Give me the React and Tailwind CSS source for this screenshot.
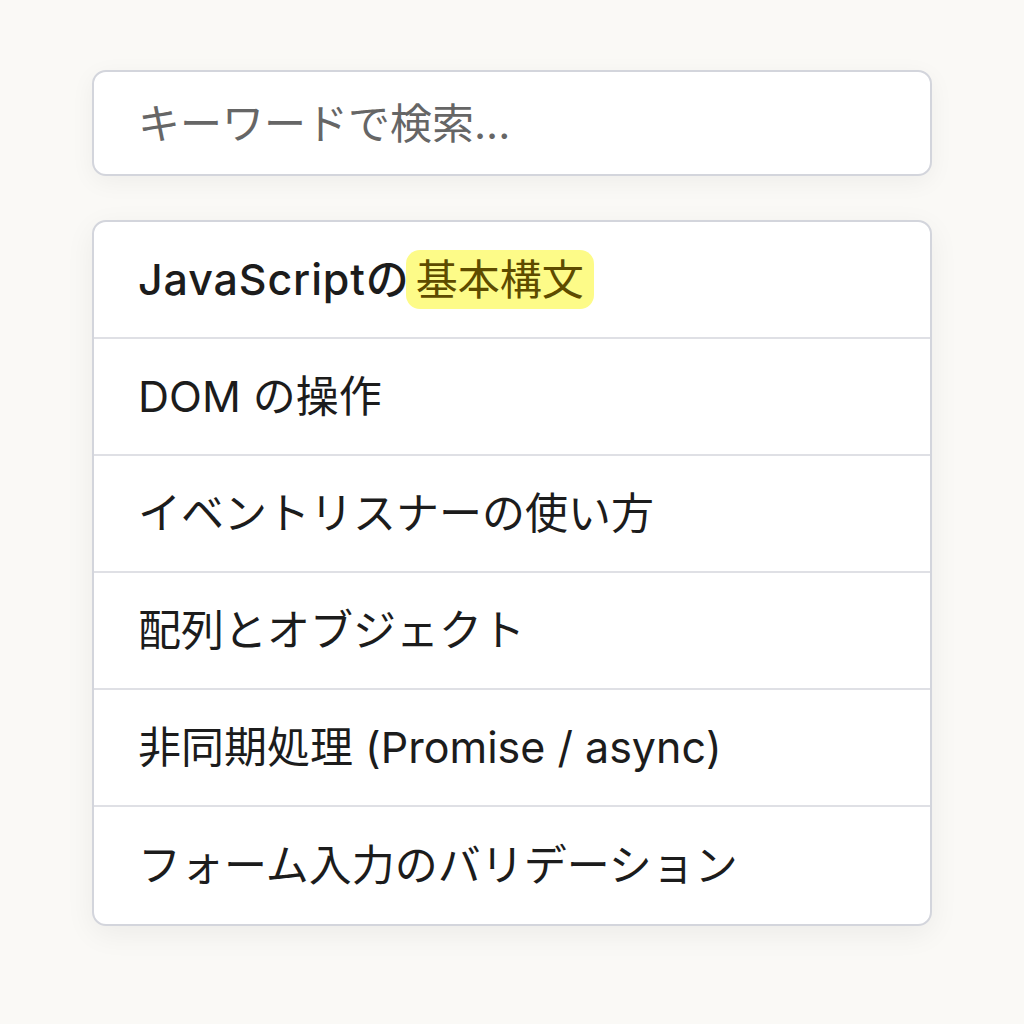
import React from 'react';

const items = [
  { id: 1, label: 'DOM の操作' },
  { id: 2, label: 'イベントリスナーの使い方' },
  { id: 3, label: '配列とオブジェクト' },
  { id: 4, label: '非同期処理 (Promise / async)' },
  { id: 5, label: 'フォーム入力のバリデーション' },
];

const font = { fontFamily: 'Inter, "Noto Sans CJK JP", sans-serif' };

const App = () => {
  return (
    <div className="min-h-screen w-full bg-[#faf9f6] pt-[70px]" style={font}>
      <div className="mx-auto w-[840px]">
        <div className="h-[106px] flex items-center rounded-[14px] border-2 border-[#d3d5dc] bg-white px-[44px] shadow-[0_6px_24px_rgba(0,0,0,0.05)]">
          <input
            type="text"
            placeholder="キーワードで検索..."
            className="w-full bg-transparent text-[42px] text-[#222] placeholder:text-[#666] outline-none"
          />
        </div>

        <div className="mt-[44px] rounded-[14px] border-2 border-[#d3d5dc] bg-white overflow-hidden shadow-[0_8px_30px_rgba(0,0,0,0.06)]">
          <div className="h-[117px] flex items-center px-[44px] border-b-2 border-[#dfe0e5]">
            <span className="text-[43px] font-medium text-[#1c1c1c] tracking-[0.02em]">JavaScriptの</span>
            <span className="ml-[-4px] rounded-[14px] bg-[#fdfb88] px-[10px] text-[42px] leading-[59px] text-[#5e4b00]">基本構文</span>
          </div>
          {items.map((item, i) => (
            <div
              key={item.id}
              className={`h-[117px] flex items-center px-[44px] ${i < items.length - 1 ? 'border-b-2 border-[#dfe0e5]' : ''}`}
            >
              <span className="text-[43px] text-[#1c1c1c]">{item.label}</span>
            </div>
          ))}
        </div>
      </div>
    </div>
  );
};

export default App;
